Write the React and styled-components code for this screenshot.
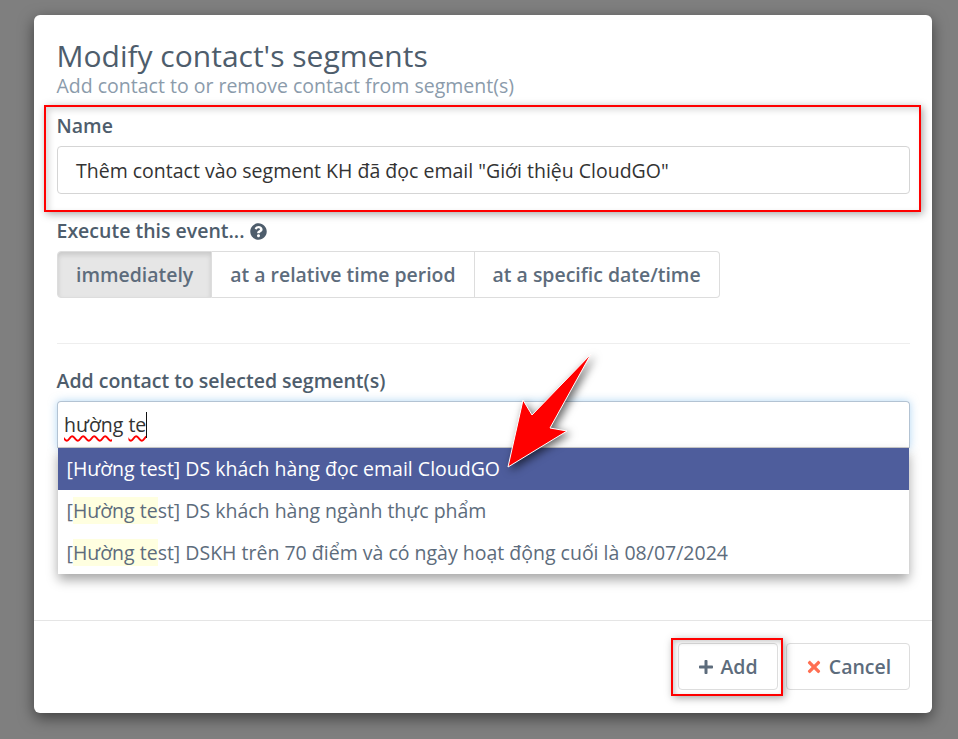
import React from 'react'
import styled, { createGlobalStyle } from 'styled-components'
import { FaQuestionCircle, FaPlus, FaTimes } from 'react-icons/fa'

const segments = [
  { id: 1, rest: ' DS khách hàng đọc email CloudGO', active: true },
  { id: 2, rest: ' DS khách hàng ngành thực phẩm' },
  { id: 3, rest: ' DSKH trên 70 điểm và có ngày hoạt động cuối là 08/07/2024' },
]

export default function App() {
  return (
    <Backdrop>
      <GlobalStyle />
      <Modal>
        <Header>
          <Title>Modify contact's segments</Title>
          <Subtitle>Add contact to or remove contact from segment(s)</Subtitle>
        </Header>
        <Body>
          <NameField>
            <Label>Name</Label>
            <NameInput>Thêm contact vào segment KH đã đọc email "Giới thiệu CloudGO"</NameInput>
          </NameField>
          <ExecuteField>
            <Label>
              Execute this event... <HelpIcon><FaQuestionCircle /></HelpIcon>
            </Label>
            <ButtonGroup>
              <GroupButton $active>immediately</GroupButton>
              <GroupButton>at a relative time period</GroupButton>
              <GroupButton>at a specific date/time</GroupButton>
            </ButtonGroup>
          </ExecuteField>
          <Divider />
          <SegmentField>
            <Label>Add contact to selected segment(s)</Label>
            <SearchBox>
              <SearchText>hường</SearchText>&nbsp;<SearchText>te</SearchText><Caret />
            </SearchBox>
            <Dropdown>
              {segments.map((s) => (
                <Option key={s.id} $active={s.active}>
                  {s.active ? '[Hường test]' : <>[<Match>Hường te</Match>st]</>}
                  {s.rest}
                </Option>
              ))}
            </Dropdown>
            <Arrow viewBox="0 0 90 120" aria-hidden="true">
              <path
                d="M85 3 L26 64 L17 49 L2 116 L61 80 L44 77 Z"
                fill="#ff0000"
                stroke="#fff"
                strokeWidth="1"
              />
            </Arrow>
          </SegmentField>
        </Body>
        <Footer>
          <AddWrap>
            <FooterButton $width="100px">
              <FaPlus size={16} /> Add
            </FooterButton>
          </AddWrap>
          <FooterButton $width="124px">
            <CancelIcon><FaTimes size={18} /></CancelIcon> Cancel
          </FooterButton>
        </Footer>
      </Modal>
    </Backdrop>
  )
}

const GlobalStyle = createGlobalStyle`
  html, body {
    margin: 0;
    padding: 0;
    background: #7f7f7f;
  }
  *, *::before, *::after {
    box-sizing: border-box;
  }
`

const Backdrop = styled.div`
  width: 958px;
  height: 739px;
  overflow: hidden;
  padding: 15px 26px 26px 34px;
  background: #7f7f7f;
  font-family: "Open Sans", sans-serif;
`

const Modal = styled.div`
  width: 898px;
  height: 698px;
  display: flex;
  flex-direction: column;
  background: #fff;
  border-radius: 6px;
  box-shadow: 0 5px 15px rgba(0, 0, 0, 0.5);
`

const Header = styled.div`
  height: 82px;
  padding: 24px 22px 0 23px;
`

const Title = styled.div`
  font-size: 30px;
  line-height: 34px;
  margin-left: -0.5px;
  color: #4e5d6c;
`

const Subtitle = styled.div`
  font-size: 19.5px;
  line-height: 22px;
  margin-top: 2px;
  margin-left: -0.5px;
  color: #8b9bab;
`

const Body = styled.div`
  flex: 1;
  padding: 0 22px 0 23px;
`

const Label = styled.div`
  font-size: 19.5px;
  font-weight: 600;
  line-height: 24px;
  color: #4e5d6c;
  display: flex;
  align-items: center;
  gap: 5px;
  margin-left: -0.5px;
`

const NameField = styled.div`
  position: relative;
  padding-top: 17px;

  &::after {
    content: '';
    position: absolute;
    left: -13px;
    right: -11px;
    top: 8px;
    height: 107px;
    border: 2px solid #ff0000;
    box-shadow: 2px 2px 8px rgba(0, 0, 0, 0.35), inset 3px 3px 6px rgba(0, 0, 0, 0.15);
    pointer-events: none;
  }
`

const NameInput = styled.div`
  margin-top: 8px;
  height: 48px;
  padding: 0 18px;
  display: flex;
  align-items: center;
  border: 1px solid #d5d5d5;
  border-radius: 4px;
  font-size: 19.5px;
  color: #333;
`

const ExecuteField = styled.div`
  margin-top: 25px;
`

const HelpIcon = styled.span`
  display: inline-flex;
  font-size: 17px;
  color: #4e5d6c;
`

const ButtonGroup = styled.div`
  display: flex;
  margin-top: 8px;
`

const GroupButton = styled.div`
  height: 47px;
  padding: 0 18px;
  display: flex;
  align-items: center;
  font-size: 19.44px;
  font-weight: 600;
  color: #5d6c7c;
  background: ${(p) => (p.$active ? '#e6e6e6' : '#fff')};
  border: 1px solid #ddd;
  border-left-width: ${(p) => (p.$active ? '1px' : '0')};
  box-shadow: ${(p) => (p.$active ? 'inset 0 3px 5px rgba(0, 0, 0, 0.125)' : 'none')};

  &:first-child {
    border-radius: 4px 0 0 4px;
  }

  &:last-child {
    border-radius: 0 4px 4px 0;
  }
`

const Divider = styled.div`
  height: 1px;
  margin-top: 45px;
  background: #eeeeee;
`

const SegmentField = styled.div`
  position: relative;
  margin-top: 25px;
`

const SearchBox = styled.div`
  margin-top: 8px;
  height: 47px;
  padding: 0 6px;
  display: flex;
  align-items: center;
  border: 1px solid #b3c3d3;
  border-bottom-color: #ccc;
  border-radius: 4px 4px 0 0;
  font-size: 19.5px;
  color: #333;
  box-shadow: 0 0 8px rgba(102, 175, 233, 0.5);
`

const SearchText = styled.span`
  text-decoration: underline wavy #ff0000 1.5px;
  text-underline-offset: 3px;
`

const Caret = styled.span`
  display: inline-block;
  width: 1px;
  height: 26px;
  background: #111;
`

const Dropdown = styled.div`
  position: absolute;
  left: 1px;
  right: 1px;
  top: 79px;
  background: #fff;
  border-radius: 0 0 4px 4px;
  box-shadow: 0 6px 12px rgba(0, 0, 0, 0.35);
`

const Option = styled.div`
  height: 42px;
  padding: 0 8.5px 2px;
  display: flex;
  align-items: center;
  white-space: pre;
  font-size: 19.5px;
  color: ${(p) => (p.$active ? '#fff' : '#5d6c7c')};
  background: ${(p) => (p.$active ? '#4e5d9c' : '#fff')};
`

const Match = styled.span`
  background: #ffffe0;
`

const Arrow = styled.svg`
  position: absolute;
  left: 449px;
  top: -18px;
  width: 90px;
  height: 120px;
  overflow: visible;
  filter: drop-shadow(3px 3px 4px rgba(0, 0, 0, 0.6));
`

const Footer = styled.div`
  height: 93px;
  padding: 22px 22px 0 0;
  display: flex;
  justify-content: flex-end;
  align-items: flex-start;
  gap: 8px;
  border-top: 1px solid #e5e5e5;
`

const AddWrap = styled.div`
  position: relative;

  &::after {
    content: '';
    position: absolute;
    left: -7px;
    right: -5px;
    top: -5px;
    bottom: -6px;
    border: 2px solid #ff0000;
    box-shadow: 2px 2px 8px rgba(0, 0, 0, 0.35), inset 2px 2px 5px rgba(0, 0, 0, 0.2);
    pointer-events: none;
  }
`

const FooterButton = styled.div`
  width: ${(p) => p.$width};
  height: 47px;
  display: flex;
  align-items: center;
  justify-content: center;
  gap: 6px;
  font-size: 19.5px;
  font-weight: 600;
  color: #5d6c7c;
  background: #fff;
  border: 1px solid #ddd;
  border-radius: 4px;
`

const CancelIcon = styled.span`
  display: inline-flex;
  color: #ff6f52;
`
